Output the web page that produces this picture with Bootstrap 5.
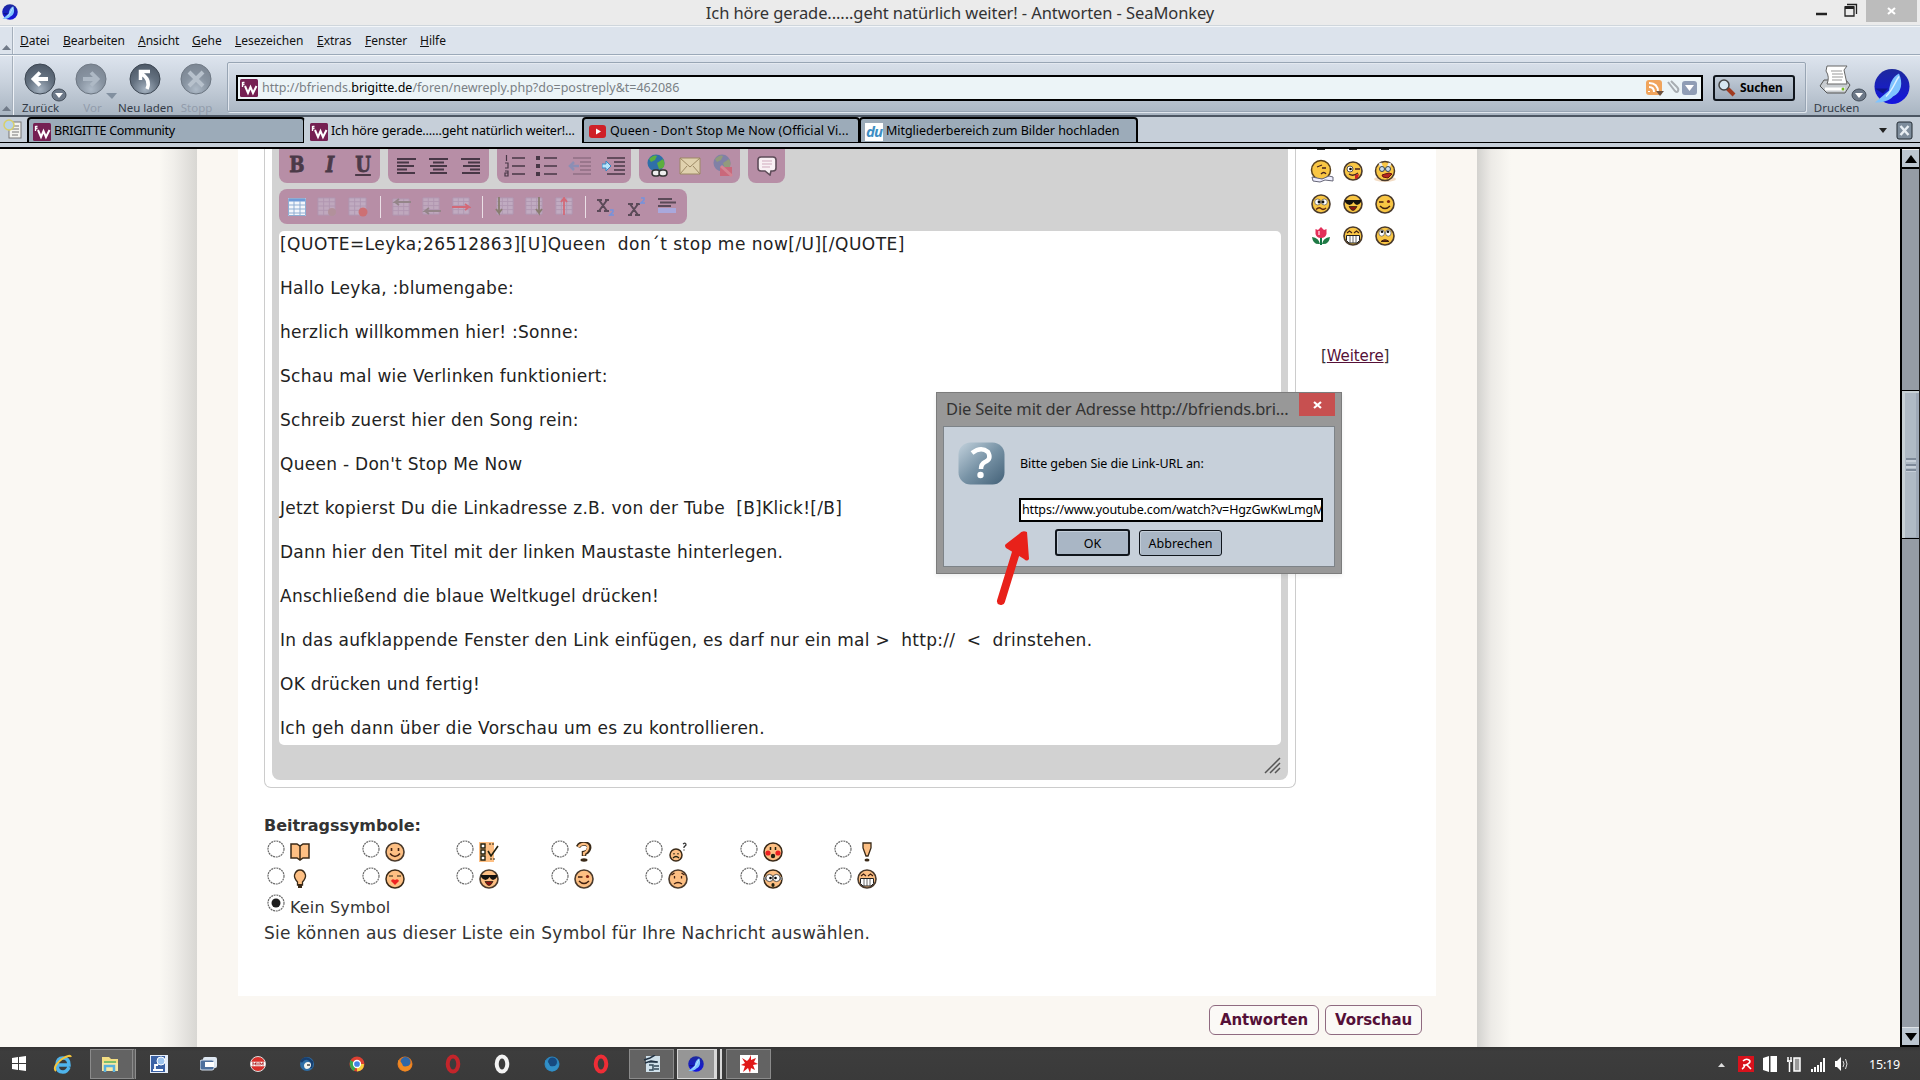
<!DOCTYPE html>
<html lang="de">
<head>
<meta charset="utf-8">
<title>Ich höre gerade......geht natürlich weiter! - Antworten - SeaMonkey</title>
<link rel="stylesheet" href="https://cdn.jsdelivr.net/npm/bootstrap@5.3.0/dist/css/bootstrap.min.css">
<script src="https://cdn.jsdelivr.net/npm/bootstrap@5.3.0/dist/js/bootstrap.bundle.min.js"></script>
<style>
body{width:1920px;height:1080px;font-family:"Noto Sans","Open Sans",sans-serif;font-size:12px;line-height:1;color:#000;background:#faf8f3}
svg{display:block;flex:none}
.nw{white-space:nowrap}
/* window chrome */
.titlebar{height:26px;background:#ebebeb;border-bottom:1px solid #cfd6dc}
.wintitle{top:5px;font-size:16.5px;letter-spacing:-.09px;color:#333}
.winclose{width:51px;height:22px;background:#bcbcbc}
.grip{width:13px;border-right:1px solid #a5afbb;box-shadow:1px 0 #eef2f7}
.menubar{height:29px;background:#dce3ec;border-bottom:1px solid #9ba9b9;border-top:1px solid #f3f6f9}
.menubar a{color:#111;text-decoration:none}
.toolbar{height:62px;background:linear-gradient(#dde4ee,#c8d1dc 45%,#a9b5c2);border-top:1px solid #f3f6f9;border-bottom:2px solid #4c5663}
.tool{width:52px;color:#343c48;font-size:11.5px}
.tool span{display:block;margin-left:-5px}
.tool.off{color:#929cab}
.urlbox{width:1579px;height:50px;border:1px solid #98a5b4;border-radius:2px;box-shadow:1px 1px #dfe5ec,inset 1px 1px #e3e8ef;padding-top:2px}
.urlfield{width:1467px;height:26px;border:2px solid #000;background:#ecf4f7;color:#7a8085;font-size:12.5px;padding-left:2px}
.suchen{width:82px;height:26px;border:2px solid #10151c;border-radius:3px;background:linear-gradient(#c0cad6,#9eabba);font-weight:700;font-size:12px;letter-spacing:-.1px}
.tabrow{height:26px;background:#c6cfd9;border-bottom:1px solid #000}
.tabx{height:26px;border:2px solid #000;border-bottom-width:1px;border-radius:4px 4px 0 0;background:#9cabb9;font-size:12.5px;letter-spacing:-.1px;margin-right:-1px;padding-top:2px}
.tabx.on{background:#c6cfd9;border-color:transparent;margin-bottom:-1px}
.substrip{height:6px;background:#c6cfd9;border-bottom:2px solid #000}
/* page */
.view{height:898px;background:#faf8f3;overflow:hidden}
.shl{width:197px;background:linear-gradient(90deg,transparent 160px,#f0eeea 174px,#d8d7d3 197px)}
.shr{width:423px;background:linear-gradient(90deg,#d3d2cf,#eceae6 14px,transparent 34px)}
.sheet{width:1280px;background:#faf7f2;padding:0 41px 0 41px}
.paper{height:847px;background:#fff;padding-left:26px}
.edframe{width:1032px;height:639px;border:1px solid #ccc;border-top:0;border-radius:0 0 7px 7px;padding:0 7px 7px}
.edgrey{height:631px;background:#d2d2d2;border-radius:0 0 8px 8px;padding:0 7px 0 7px}
.grp{height:34px;background:#b78ea6;border-radius:0 0 8px 8px;gap:15px;padding:0 7px}
.fmt{font:900 22px/22px "DejaVu Serif","Liberation Serif",serif;color:#4b3a48;width:20px;text-align:center;transform:scaleX(.82);-webkit-text-stroke:.8px #4b3a48}
.grp2{height:35px;width:408px;background:#b78ea6;border-radius:8px;padding:0 9px}
.sep{width:1px;height:22px;background:#eadfe6}
.areatext{height:514px;background:#fff;border-radius:5px;padding:2px 1px 0;font:17px/22px "DejaVu Sans",sans-serif;color:#222;white-space:pre;letter-spacing:.28px}
.dv{font-family:"DejaVu Sans",sans-serif;color:#333}
.actbtn{height:30px;border:1px solid #8f6a80;border-radius:6px;background:#fbf9f6;color:#551038;font:700 15px/27px "DejaVu Sans",sans-serif;letter-spacing:-.1px;padding:0}
/* scrollbar */
.sb{width:20px;background:#959ca5;border-left:2px solid #000;border-right:1px solid #222}
.sbb{height:20px;background:#bcc6d0;border-bottom:2px solid #000;border-top:1px solid #eee}
.thumb{height:149px;margin-top:221px;background:#afbac5;border:solid #000;border-width:1px 0;box-shadow:inset 3px 2px #c7d0d5,inset -3px -1px #9ea9b7}
/* dialog */
.dlg{left:936px;top:392px;width:406px;height:182px;background:#989898;border:1px solid #7c7c7c;padding:0 6px 6px 6px}
.dlgin{height:141px;background:#c7d0da;border:1px solid #7d8388;padding:0 0 0 14px;margin-top:-1px}
.dtitle{font-size:16.5px;letter-spacing:-.17px;padding:8px 0 0 3px;color:#333}
.dbtn{border:1px solid #10151c;border-radius:3px;background:#a9b6c5;box-shadow:inset 1px 1px #c3cdd8;font-size:12.5px}
.linkfield{margin:12px 0 0 61px;width:304px;height:24px;border:2px solid #000;font-size:12.5px;letter-spacing:-.13px;padding-top:1px}
.caret{width:1px;height:18px;margin-left:1px;background:#000}
.arrowmark{left:996px;top:528px}
/* taskbar */
.taskbar{height:33px;background:linear-gradient(#333,#3d3d3d 4px,#3a3a3a)}
.tile{background:#636363;border:1px solid #8b8b8b}
</style>
</head>
<body class="overflow-hidden d-flex flex-column position-relative">

<svg width="0" height="0" class="position-absolute">
<defs>
<radialGradient id="orb" cx=".5" cy=".85" r=".9"><stop offset="0" stop-color="#a5b2c0"/><stop offset=".5" stop-color="#647180"/><stop offset="1" stop-color="#4a5563"/></radialGradient>
<linearGradient id="blu" x2="0" y2="1"><stop offset="0" stop-color="#1d2a9c"/><stop offset="1" stop-color="#1414e0"/></linearGradient>
<linearGradient id="qm" x2="1" y2="1"><stop offset="0" stop-color="#c3d2dd"/><stop offset=".5" stop-color="#7893a6"/><stop offset="1" stop-color="#436178"/></linearGradient>
<symbol id="sm" viewBox="0 0 36 36"><circle cx="18" cy="18" r="17.500" fill="url(#blu)"/><path d="M25 5C18 9 16 15 15 22L1 34c9 0 14-2 18-6C28 24 29 14 25 5z" fill="#7fc4ff"/><path d="M1 20h13l-5 5" fill="#0c1475" opacity=".7"/><path d="M25 8C21 13 20 20 12 28" stroke="#dff2ff" stroke-width="1.500" fill="none"/></symbol>
<symbol id="bw" viewBox="0 0 18 18"><rect width="18" height="18" rx="1.500" fill="#752052"/><path d="M2.500 3v5M2.500 3.500h2M2.500 5.500h2" stroke="#fff" stroke-width="1.300"/><path d="M5 7l3 7 2.500-6L13 14l3.500-7" stroke="#fff" stroke-width="2" fill="none"/></symbol>
<symbol id="drop" viewBox="0 0 16 14"><ellipse cx="8" cy="7" rx="7" ry="6" fill="#6c7888" stroke="#444e5a"/><path d="M4 5h8l-4 5z" fill="#fff"/></symbol>
<symbol id="fc" viewBox="0 0 20 20"><circle cx="10" cy="10" r="9" stroke="#4a3a2c" stroke-width="1.600"/></symbol>
<symbol id="smile" viewBox="0 0 20 20"><use href="#fc"/><path d="M6.500 6v3M13.500 6v3M5 11.500q5 6 10 0" stroke="#402010" stroke-width="1.600" fill="none"/></symbol>
<symbol id="wink" viewBox="0 0 20 20"><use href="#fc"/><path d="M4 8h4.500M5 12q5 5 10 0" stroke="#402010" stroke-width="1.500" fill="none"/><circle cx="13.500" cy="7.500" r="1.600" fill="#802010"/></symbol>
<symbol id="cool" viewBox="0 0 20 20"><use href="#fc"/><path d="M2 6h16v2q-2 3-4 3t-3.500-3Q9 11 6.500 11T2 8z" fill="#15120f"/><path d="M6 12.500h8q-4 8-8 0z" fill="#8a1510" stroke="#321" stroke-width=".8"/></symbol>
<symbol id="grin" viewBox="0 0 20 20"><use href="#fc"/><path d="M4 7l2.500-2L9 7M11 7l2.500-2L16 7" stroke="#402010" stroke-width="1.200" fill="none"/><path d="M3.500 9.500h13v5l-2.500 2.500H6L3.500 14.500z" fill="#fff" stroke="#222" stroke-width="1"/><path d="M7 10v7M10 10v7M13 10v7" stroke="#444" stroke-width=".8"/></symbol>
<symbol id="eyes" viewBox="0 0 20 20"><use href="#fc"/><ellipse cx="6.700" cy="7" rx="2.800" ry="3.200" fill="#fff" stroke="#555" stroke-width=".7"/><ellipse cx="13.300" cy="7" rx="2.800" ry="3.200" fill="#fff" stroke="#555" stroke-width=".7"/><circle cx="7" cy="5.800" r="1.300" fill="#111"/><circle cx="13" cy="5.800" r="1.300" fill="#111"/><path d="M6 15.500q4-3.500 8 0z" fill="#7c2b12" stroke="#402010"/></symbol>
<symbol id="conf" viewBox="0 0 20 20"><use href="#fc"/><circle cx="6.700" cy="8" r="3" fill="#fff" stroke="#555" stroke-width=".7"/><circle cx="13.300" cy="8" r="3" fill="#fff" stroke="#555" stroke-width=".7"/><circle cx="8" cy="8" r="1.400" fill="#111"/><circle cx="12" cy="8" r="1.400" fill="#111"/><path d="M5 15.500q3-3 5-1t5-.5" fill="none" stroke="#602a10" stroke-width="1.500"/></symbol>
<symbol id="sad" viewBox="0 0 20 20"><use href="#fc"/><path d="M6.500 7v2.500M13.500 7v2.500M3.500 6l3-2M16.500 6l-3-2M6 15q4-3 8 0" stroke="#402010" stroke-width="1.300" fill="none"/></symbol>
<symbol id="rad" viewBox="0 0 18 18"><circle cx="9" cy="9" r="8" fill="#fff" stroke="#6a6a6a" stroke-width="1.200" stroke-dasharray="2 .7"/></symbol>
<symbol id="opera" viewBox="0 0 20 20"><ellipse cx="10" cy="10" rx="5.300" ry="7.500" fill="none" stroke="currentColor" stroke-width="4"/></symbol>
<symbol id="grid" viewBox="0 0 20 20"><rect x="1" y="1" width="18" height="18" fill="#cfd8ea"/><path d="M1 5h18M1 9.500h18M1 14h18M7 1v18M13 1v18M1 1h18v18H1z" stroke="#a7a7c4" fill="none"/></symbol>
<symbol id="globe" viewBox="0 0 20 20"><circle cx="10" cy="9" r="8.500" fill="#2f6fa8"/><path d="M3 5q5-5 8-3l-2 4-4 2zM11 9l6-4q3 5 0 9l-4 1z" fill="#5cae3e"/></symbol>
</defs>
</svg>

<header class="titlebar d-flex align-items-start flex-shrink-0 position-relative">
  <svg width="18" height="16" class="mt-1" style="margin-left:1px"><use href="#sm"/></svg>
  <div class="wintitle nw position-absolute start-50 translate-middle-x">Ich höre gerade......geht natürlich weiter! - Antworten - SeaMonkey</div>
  <div class="d-flex ms-auto" style="margin-right:3px">
    <svg width="54" height="22"><path d="M4 14h11" stroke="#222" stroke-width="2.500"/><path d="M33 7h9v9h-9zM35 4.500h9.500V14" stroke="#222" stroke-width="1.300" fill="none"/><path d="M33 7.500h9" stroke="#222" stroke-width="3"/></svg>
    <div class="winclose d-flex align-items-center justify-content-center"><svg width="10" height="8"><path d="M1 1l7 6M8 1L1 7" stroke="#fff" stroke-width="2.200"/></svg></div>
  </div>
</header>

<nav class="menubar d-flex flex-shrink-0">
  <div class="grip d-flex align-items-end justify-content-center pb-1"><svg width="9" height="5"><path d="M0 5h9L4.500 0z" fill="#707a88"/></svg></div>
  <div class="d-flex align-items-center nw">
    <a href="#" style="width:43px;margin-left:7px"><u>D</u>atei</a><a href="#" style="width:75px"><u>B</u>earbeiten</a><a href="#" style="width:54px"><u>A</u>nsicht</a><a href="#" style="width:43px"><u>G</u>ehe</a><a href="#" style="width:82px"><u>L</u>esezeichen</a><a href="#" style="width:48px"><u>E</u>xtras</a><a href="#" style="width:55px"><u>F</u>enster</a><a href="#"><u>H</u>ilfe</a>
  </div>
</nav>

<div class="toolbar d-flex flex-shrink-0 nw">
  <div class="grip d-flex align-items-end justify-content-center pb-1"><svg width="9" height="5"><path d="M0 5h9L4.500 0z" fill="#707a88"/></svg></div>
  <div class="d-flex" style="padding-top:7px">
    <div class="tool text-center ms-1"><svg width="56" height="39"><circle cx="23" cy="16" r="15" fill="url(#orb)" stroke="#3d4753"/><path d="M31 16H17M23 9.500L16.500 16l6.500 6.500" stroke="#fff" stroke-width="3.800" fill="none"/><use href="#drop" x="34" y="25" width="16" height="14"/></svg><span>Zurück</span></div>
    <div class="tool off text-center"><svg width="54" height="39"><circle cx="22" cy="16" r="15" fill="url(#orb)" stroke="#3d4753" opacity=".65"/><path d="M14 16h14M22 9.500l6.500 6.500-6.500 6.500" stroke="#aeb9c5" stroke-width="3.800" fill="none"/><path d="M37 30h11l-5 6z" fill="#8290a0"/></svg><span>Vor</span></div>
    <div class="tool text-center"><svg width="52" height="39"><circle cx="24" cy="16" r="15" fill="url(#orb)" stroke="#3d4753"/><path d="M26 26q4-9-5-15M29 8.500h-9.500V17" stroke="#fff" stroke-width="3.500" fill="none"/></svg><span style="margin-left:-3px">Neu laden</span></div>
    <div class="tool off text-center"><svg width="50" height="39"><circle cx="23" cy="16" r="15" fill="url(#orb)" stroke="#3d4753" opacity=".65"/><path d="M16 9l14 14M30 9L16 23" stroke="#b7c1cc" stroke-width="4"/></svg><span>Stopp</span></div>
  </div>
  <div class="urlbox d-flex align-items-center px-2" style="margin:6px 0 0 2px">
    <div class="urlfield d-flex align-items-center"><svg width="18" height="18" class="me-1"><use href="#bw"/></svg><span>http://bfriends.<span class="text-black">brigitte.de</span>/foren/newreply.php?do=postreply&amp;t=462086</span>
      <svg width="52" height="18" class="ms-auto" style="margin-right:3px"><rect y="1" width="16" height="15" rx="3" fill="#f0a45c"/><path d="M3 12v1M3 8q5 0 5 5M3 4q9 0 9 9" stroke="#fff" stroke-width="2" fill="none"/><path d="M10 12h8l-4 5z" fill="#6b5140"/><path d="M22 3l7 9q2 2 3 0t-1-4l-6-6" stroke="#a8adb2" stroke-width="2" fill="none"/><rect x="36" y="2" width="15" height="14" rx="3" fill="#8f9db5"/><path d="M39 6h9l-4.500 6z" fill="#fff"/></svg>
    </div>
    <button class="suchen d-flex align-items-center p-0" style="margin-left:10px;padding-left:2px!important"><svg width="20" height="18" style="margin-right:3px"><path d="M10 9l7 7" stroke="#a03a20" stroke-width="4"/><circle cx="7" cy="6" r="5" fill="#d7e6f0" stroke="#444" stroke-width="1.500"/></svg>Suchen</button>
  </div>
  <div class="text-center" style="width:64px;color:#343c48;font-size:11.500px;padding-top:8px"><svg width="62" height="38"><g transform="translate(1)"><path d="M13 22l4-6h22l4 5-5 8H20z" fill="#c8ccd0" stroke="#555"/><path d="M20 2h20l-3 4 3 14H20q3-7-1-13z" fill="#fff" stroke="#666"/><path d="M24 7h11M25 10h11M25 13h11M25 16h10" stroke="#999"/><path d="M18 25h20" stroke="#fff" stroke-width="3"/><circle cx="36" cy="25" r="1.500" fill="#7b2"/><use href="#drop" x="44" y="24" width="16" height="14"/></g></svg><span style="margin-right:3px">Drucken</span></div>
  <svg width="36" height="37" class="ms-auto" style="margin:12px 10px 0 0"><use href="#sm"/></svg>
</div>

<div class="tabrow d-flex align-items-start flex-shrink-0 nw">
  <svg width="20" height="21" style="margin:2px 4px 0 3px"><rect x="6" y="3" width="12" height="16" fill="#f4f4ef" stroke="#777"/><path d="M9 7h7M9 10h7M9 13h7M9 16h6" stroke="#777"/><circle cx="6" cy="6" r="5" fill="#b9d3e8" stroke="#d8cf6a" stroke-width="1.500"/></svg>
  <div class="tabx d-flex align-items-center ps-1" style="width:278px"><svg width="18" height="18" style="margin-right:3px"><use href="#bw"/></svg><span style="letter-spacing:-.3px">BRIGITTE Community</span></div>
  <div class="tabx on d-flex align-items-center ps-1" style="width:279px"><svg width="18" height="18" style="margin-right:3px"><use href="#bw"/></svg><span style="letter-spacing:-.12px">Ich höre gerade......geht natürlich weiter!...</span></div>
  <div class="tabx d-flex align-items-center ps-1" style="width:278px"><svg width="18" height="18" style="margin:0 3px 0 1px"><rect y="2" width="17" height="13" rx="3" fill="#cf2027"/><path d="M7 5.500v6l5-3z" fill="#fff"/></svg><span style="letter-spacing:.09px">Queen - Don't Stop Me Now (Official Vi...</span></div>
  <div class="tabx d-flex align-items-center ps-1" style="width:279px"><span class="bg-white fst-italic fw-bold text-center" style="width:18px;height:18px;margin-right:3px;color:#3f8fc4;font-size:15px;line-height:17px;letter-spacing:-1px">du</span><span style="letter-spacing:-.04px">Mitgliederbereich zum Bilder hochladen</span></div>
  <svg width="40" height="24" class="ms-auto" style="margin-right:4px"><path d="M3 11h8l-4 5z" fill="#222"/><rect x="21" y="5" width="15" height="17" rx="2" fill="#7e8d9c" stroke="#222a33"/><path d="M24.500 9l8 9M32.500 9l-8 9" stroke="#e8eef3" stroke-width="2.500"/></svg>
</div>
<div class="substrip flex-shrink-0"></div>

<main class="view d-flex flex-shrink-0">
  <div class="shl flex-shrink-0"></div>
  <div class="sheet flex-shrink-0">
    <div class="paper d-flex">
      <div class="flex-shrink-0">
        <div class="edframe">
          <div class="edgrey">
            <div class="d-flex" style="gap:8px">
              <div class="grp d-flex align-items-center justify-content-center pb-1" style="width:101px;gap:13px">
                <span class="fmt">B</span><span class="fmt fst-italic">I</span><span class="fmt text-decoration-underline">U</span>
              </div>
              <div class="grp d-flex align-items-center justify-content-center" style="width:101px;gap:13px">
                <svg width="19" height="18"><path d="M0 2h19M0 5.500h12M0 9h17M0 12.500h10M0 16h18" stroke="#483746" stroke-width="1.800"/></svg>
                <svg width="19" height="18"><path d="M0 2h19M4 5.500h11M1 9h17M4 12.500h11M1 16h17" stroke="#483746" stroke-width="1.800"/></svg>
                <svg width="19" height="18"><path d="M0 2h19M7 5.500h12M2 9h17M9 12.500h10M1 16h18" stroke="#483746" stroke-width="1.800"/></svg>
              </div>
              <div class="grp d-flex align-items-center justify-content-center" style="width:134px;gap:11px">
                <svg width="21" height="24"><path d="M8 4h13M8 12h13M8 20h13" stroke="#483746" stroke-width="1.700"/><path d="M2.500 1v6M1 9h3v5H1M1 17h3v5H1v-3h3" stroke="#483746" stroke-width="1.200" fill="none"/></svg>
                <svg width="21" height="24"><path d="M8 4h13M8 12h13M8 20h13" stroke="#483746" stroke-width="1.700"/><path d="M0 4h4M0 12h4M0 20h4" stroke="#483746" stroke-width="4"/></svg>
                <svg width="23" height="24" opacity=".35"><path d="M5 4h18M12 8h11M12 12h11M12 16h11M5 20h18" stroke="#483746" stroke-width="1.600"/><path d="M11 12H3M6 8l-4 4 4 4" stroke="#3f8fd0" stroke-width="2.500" fill="none"/></svg>
                <svg width="23" height="24"><path d="M5 4h18M12 8h11M12 12h11M12 16h11M5 20h18" stroke="#483746" stroke-width="1.700"/><path d="M0 10h4V7l5 5-5 5v-3H0z" fill="#b8e4fa" stroke="#3487c4"/></svg>
              </div>
              <div class="grp d-flex align-items-center justify-content-center" style="width:101px;gap:11px">
                <svg width="22" height="24"><use href="#globe" width="20" height="20"/><rect x="6" y="16" width="8" height="6" rx="3" fill="#eee" stroke="#333" stroke-width="1.500"/><rect x="13" y="16" width="8" height="6" rx="3" fill="#eee" stroke="#333" stroke-width="1.500"/></svg>
                <svg width="22" height="20"><path d="M1 2h20v16H1z" fill="#e0d1ae" stroke="#9d8965"/><path d="M1 2l10 9 10-9M1 18l7-8M21 18l-7-8" stroke="#9d8965" fill="none"/></svg>
                <svg width="22" height="24" opacity=".4"><use href="#globe" width="20" height="20"/><path d="M8 13h12v9H8z" fill="#e8303c"/><path d="M9 12l11 10" stroke="#f77" stroke-width="3"/></svg>
              </div>
              <div class="grp d-flex align-items-center justify-content-center" style="width:37px"><svg width="20" height="20"><path d="M4 1h12q3 0 3 3v8q0 3-3 3h-2l-1 4-5-4H4q-3 0-3-3V4q0-3 3-3z" fill="#f8f0f4" stroke="#5e4c59" stroke-width="1.600"/><path d="M5 5h10M5 8h10M5 11h8" stroke="#cfa9bd"/></svg></div>
            </div>
            <div class="grp2 d-flex align-items-center justify-content-between" style="margin-top:6px;margin-bottom:7px">
              <svg width="18" height="18"><rect width="18" height="18" fill="#f3f6fb"/><path d="M1 2h16" stroke="#6e9bd8" stroke-width="3"/><path d="M1 7h16M1 11h16M1 15h16M6 3v14M12 3v14M.5.5h17v17H.5z" stroke="#8fadd2" fill="none"/></svg>
              <svg width="20" height="20" opacity=".35"><use href="#grid" width="19" height="19"/><circle cx="15" cy="15" r="4" fill="#a98"/></svg>
              <svg width="20" height="20" opacity=".4"><use href="#grid" width="19" height="19"/><circle cx="15" cy="15" r="4.500" fill="#f0452c"/></svg>
              <div class="sep"></div>
              <svg width="19" height="19" opacity=".35"><use href="#grid" y="1" width="18" height="18"/><path d="M19 5H3l4-3M3 5l4 3" stroke="#575" stroke-width="1.800" fill="none"/></svg>
              <svg width="19" height="19" opacity=".35"><use href="#grid" width="18" height="18"/><path d="M19 14H3l4-3M3 14l4 3" stroke="#575" stroke-width="1.800" fill="none"/></svg>
              <svg width="19" height="19" opacity=".4"><use href="#grid" width="18" height="18"/><path d="M0 10h17l-4-3M17 10l-4 3" stroke="#f33" stroke-width="1.800" fill="none"/></svg>
              <div class="sep"></div>
              <svg width="19" height="19" opacity=".4"><use href="#grid" x="1" width="18" height="18"/><path d="M4 0v16l-3-4M4 16l3-4" stroke="#462" stroke-width="1.800" fill="none"/></svg>
              <svg width="19" height="19" opacity=".4"><use href="#grid" width="18" height="18"/><path d="M14 0v16l-3-4M14 16l3-4" stroke="#462" stroke-width="1.800" fill="none"/></svg>
              <svg width="19" height="19" opacity=".4"><use href="#grid" width="18" height="18"/><path d="M9 18V1L6 5M9 1l3 4" stroke="#f33" stroke-width="1.800" fill="none"/></svg>
              <div class="sep"></div>
              <svg width="19" height="20"><path d="M2 3l8 11M10 3L2 14M0 3h5M8 3h4M0 14h4M7 14h5" stroke="#5b4a58" stroke-width="2"/><path d="M13 13h3v2l-3 3h4" stroke="#7592dd" stroke-width="1.500" fill="none"/></svg>
              <svg width="19" height="20"><path d="M2 7l8 11M10 7L2 18M0 7h5M8 7h4M0 18h4M7 18h5" stroke="#5b4a58" stroke-width="2"/><path d="M13 1h3v2l-3 3h4" stroke="#7592dd" stroke-width="1.500" fill="none"/></svg>
              <svg width="20" height="20"><path d="M0 2h14M2 5.500h16M0 9h13" stroke="#5b4a58" stroke-width="2"/><rect y="11" width="18" height="5" fill="#a9a8dc"/></svg>
            </div>
            <div class="areatext"><span style="letter-spacing:.49px">[QUOTE=Leyka;26512863][U]Queen  don´t stop me now[/U][/QUOTE]</span>

Hallo Leyka, :blumengabe:

herzlich willkommen hier! :Sonne:

Schau mal wie Verlinken funktioniert:

Schreib zuerst hier den Song rein:

Queen - Don't Stop Me Now

Jetzt kopierst Du die Linkadresse z.B. von der Tube  [B]Klick![/B]

Dann hier den Titel mit der linken Maustaste hinterlegen.

Anschließend die blaue Weltkugel drücken!

In das aufklappende Fenster den Link einfügen, es darf nur ein mal &gt;  http://  &lt;  drinstehen.

OK drücken und fertig!

Ich geh dann über die Vorschau um es zu kontrollieren.</div>
            <div class="d-flex justify-content-end"><svg width="17" height="17" style="margin-top:12px"><path d="M1 16L16 1M6 16L16 6M11 16l5-5" stroke="#555" stroke-width="1.500"/></svg></div>
          </div>
        </div>
        <div class="dv" style="font-size:17px;letter-spacing:.25px">
          <div class="fw-bold" style="margin-top:30px;height:19px;font-size:16px;letter-spacing:-.05px">Beitragssymbole:</div>
          <div id="symbols" style="margin-top:3px"></div>
          <div class="d-flex align-items-start" style="height:27px;padding-left:3px"><svg width="18" height="18" style="margin:1px 3px 0 0"><use href="#rad"/><circle cx="9" cy="9" r="4.500" fill="#1d1d1d"/></svg><span style="padding:7px 0 0 2px;font-size:16px;letter-spacing:.15px">Kein Symbol</span></div>
          <div style="padding-top:5px">Sie können aus dieser Liste ein Symbol für Ihre Nachricht auswählen.</div>
        </div>
      </div>
      <div style="padding-left:9px">
        <svg width="100" height="2" style="margin-bottom:4px"><path d="M12 0h8M44 0h8M76 0h8" stroke="#333" stroke-width="2"/></svg>
        <div id="smileys" class="d-grid" style="grid-template-columns:repeat(3,32px);grid-template-rows:repeat(3,32.500px)"></div>
        <div class="dv" style="font-size:15px;letter-spacing:-.1px;margin-top:96px;padding-left:16px">[<u style="color:#551038">Weitere</u>]</div>
      </div>
    </div>
    <div class="d-flex justify-content-end" style="gap:6px;padding:9px 14px 0 0">
      <button class="actbtn" style="width:110px">Antworten</button>
      <button class="actbtn" style="width:97px">Vorschau</button>
    </div>
  </div>
  <div class="shr flex-shrink-0"></div>
  <div class="sb flex-shrink-0 d-flex flex-column">
    <div class="sbb d-flex align-items-center justify-content-center"><svg width="12" height="8"><path d="M0 8h12L6 0z"/></svg></div>
    <div class="thumb d-flex align-items-center justify-content-center"><svg width="10" height="14"><path d="M0 1h10M0 7h10M0 12h10" stroke="#6f7b8b" stroke-width="1.500"/><path d="M0 3h10M0 9h10M0 14h10" stroke="#dde3ea"/></svg></div>
    <div class="sbb d-flex align-items-center justify-content-center mt-auto border-top border-black"><svg width="12" height="8"><path d="M0 0h12L6 8z"/></svg></div>
  </div>
</main>

<footer class="taskbar d-flex align-items-center flex-grow-1">
  <div id="tasks" class="d-flex align-items-center"></div>
  <div class="d-flex align-items-center ms-auto text-white" style="padding-right:20px">
    <svg width="132" height="22"><path d="M1 14h7L4.500 10z" fill="#ddd"/><rect x="21" y="3" width="16" height="16" fill="#d8121c"/><path d="M26 8q3-3 6-1t-3 5h-3M30 12l4 4M25 16q2-1 3-4" stroke="#fff" stroke-width="1.600" fill="none"/><path d="M46 5l6-2v16l-6-2zM53.500 3H60v16h-6.500z" fill="#fff"/><path d="M71 4v5M74 4v5M70 8h5M72.500 9v10" stroke="#fff" stroke-width="1.500"/><rect x="77" y="5" width="6" height="13" fill="#999" stroke="#fff" stroke-width="1.500"/><path d="M95 19v-3M98 19v-5M101 19v-7M104 19v-10M107 19V5" stroke="#fff" stroke-width="2"/><path d="M118 8h2l4-4v14l-4-4h-2z" fill="#fff"/><path d="M126 8q2 3 0 6M128.500 6q3 5 0 10" stroke="#ddd" fill="none"/></svg>
    <span style="font-size:12.500px;margin-left:20px;padding-top:4px;letter-spacing:-.2px">15:19</span>
  </div>
</footer>

<div class="dlg position-absolute shadow-sm">
  <div class="d-flex align-items-start nw" style="height:34px">
    <span class="dtitle">Die Seite mit der Adresse http://bfriends.bri...</span>
    <div class="d-flex align-items-center justify-content-center ms-auto" style="width:36px;height:23px;background:#c75050"><svg width="9" height="8"><path d="M1 1l7 6M8 1L1 7" stroke="#fff" stroke-width="2.200"/></svg></div>
  </div>
  <div class="dlgin nw">
    <div class="d-flex align-items-center" style="padding-top:15px">
      <svg width="47" height="44"><rect x=".5" y=".5" width="46" height="42" rx="12" fill="url(#qm)"/><path d="M14 11q9-7 16-1 4 7-3 10-4 2-4 7" fill="none" stroke="#fff" stroke-width="4.500"/><circle cx="22.500" cy="33" r="3.200" fill="#fff"/></svg>
      <span style="margin-left:15px;font-size:12.500px;letter-spacing:-.06px">Bitte geben Sie die Link-URL an:</span>
    </div>
    <div class="linkfield overflow-hidden d-flex align-items-center bg-white"><span class="caret"></span><span>https://www.youtube.com/watch?v=HgzGwKwLmgM</span></div>
    <div class="d-flex align-items-center" style="padding:7px 0 0 97px;gap:9px">
      <button class="dbtn p-0 pt-1" style="width:75px;height:27px;border-width:2px">OK</button>
      <button class="dbtn p-0 pt-1" style="width:83px;height:26px">Abbrechen</button>
    </div>
  </div>
</div>
<svg class="arrowmark position-absolute" width="40" height="80"><path d="M22 18L5 73" stroke="#e8211a" stroke-width="8" stroke-linecap="round"/><path d="M23 6q3-4 8-2l2 27q-2 3-5 0L10 20q-2-3 0-4z" fill="#e8211a"/></svg>

<script>
const S='#422';
const face=(id,c,s=20)=>`<svg width="${s}" height="${s}" fill="${c}"><use href="#${id}" width="${s}" height="${s}"/></svg>`;
const sv=(w,h,b)=>`<svg width="${w}" height="${h}" viewBox="0 0 ${w} ${h}">${b}</svg>`;
// smiley palette beside the editor
const Y='#f9c644';
document.getElementById('smileys').innerHTML=[
 sv(26,24,`<circle cx="13" cy="11" r="9.500" fill="${Y}" stroke="#5a421c" stroke-width="1.500"/><path d="M9 8l5-2M14 9h4M13 15q3-3 5 0" stroke="${S}" stroke-width="1.300" fill="none"/><path d="M4 18l5 1 5 1 7-3 4 1v4l-8-1-5 2-7-1z" fill="#eef" stroke="#667"/>`),
 sv(20,24,`<circle cx="10" cy="12" r="9" fill="${Y}" stroke="#4a3a2c" stroke-width="1.600"/><circle cx="7" cy="10" r="3" fill="#fff" stroke="#555"/><circle cx="7.500" cy="10" r="1.300"/><path d="M12 10h5M6 15q4 3 9-1" stroke="${S}" stroke-width="1.300" fill="none"/><path d="M12 16l4-1-1 4-3 1z" fill="#c22"/>`),
 sv(22,24,`<ellipse cx="11" cy="20" rx="11" ry="3" fill="#f3dcc4"/><circle cx="11" cy="12" r="9.500" fill="${Y}" stroke="#4a3a2c" stroke-width="1.500"/><path d="M6 4l2 5M16 4l-2 5" stroke="#eee" stroke-width="3"/><circle cx="8" cy="10" r="2.500" fill="#cde" stroke="#345"/><circle cx="14" cy="10" r="2.500" fill="#cde" stroke="#345"/><path d="M8 16l3-1 4-1 3 1-4 4-5-1z" fill="#b5281e" stroke="#611"/>`),
 face('conf',Y),face('cool',Y),face('wink',Y),
 sv(20,20,`<path d="M10 9v10" stroke="#174" stroke-width="2"/><path d="M1 11q7 1 8 7-7 1-8-7zM19 11q-7 1-8 7 7 1 8-7z" fill="#1f7a45"/><path d="M4.500 3l2.500 1 3-3 3 3 2.500-1v5q-1 4-5.500 4T4.500 8z" fill="#e3305a"/><path d="M8 5v4" stroke="#f8a0b4" stroke-width="2"/>`),
 face('grin',Y),face('eyes',Y)].map(x=>`<div class="d-flex justify-content-center align-items-center">${x}</div>`).join('');

// post icons, two rows of seven
const O='#fdbf83';
const rows=[[
 sv(20,20,`<path d="M1 2h6l3 2 3-2h6v14h-6l-3 2-3-2H1zM10 4v14" fill="${O}" stroke="#3a2a18" stroke-width="1.500"/>`),
 face('smile',O),
 sv(20,20,`<rect width="15" height="20" fill="${O}"/><path d="M2 2h4v4H2zM2 8h4v4H2zM2 14h4v4H2z" fill="#fff" stroke="#221" stroke-width="1.400"/><path d="M9 9l3 5 7-10" stroke="#221" stroke-width="1.600" fill="none"/><path d="M10 2h6M11 17h5" stroke="#221" stroke-dasharray="2 1"/>`),
 sv(20,20,`<path d="M4 5q2-4 7-3.500 5 1 4 5t-5 4.500v3" fill="none" stroke="#3a2a18" stroke-width="4.500"/><path d="M4.500 5q2-3.500 6.500-3 4 1 3 4.500T10 11v2.500" fill="none" stroke="${O}" stroke-width="2.200"/><ellipse cx="10" cy="18" rx="3.500" ry="1.700" fill="#3a2a18"/>`),
 sv(20,20,`<circle cx="8" cy="13" r="6" fill="${O}" stroke="#3a2a18" stroke-width="1.500"/><path d="M6 11v1.500M10 11v1.500M5 16q3-3 6 0" stroke="#221" fill="none" stroke-width="1.200"/><path d="M15 2q3-2 3 1l-2 2v1M16 7.500v1" stroke="#333" fill="none" stroke-width="1.300"/>`),
 sv(20,20,`<circle cx="10" cy="10" r="9" fill="${O}" stroke="#3a2a18" stroke-width="1.500"/><path d="M7.500 5v3M12.500 5v3" stroke="#221" stroke-width="1.500"/><circle cx="5" cy="11" r="2.600" fill="#e22"/><circle cx="15" cy="11" r="2.600" fill="#e22"/><circle cx="10" cy="14" r="2.200" fill="#221"/>`),
 sv(20,20,`<path d="M6 1h8v5l-3 8H9L6 6z" fill="${O}" stroke="#3a2a18" stroke-width="1.300"/><ellipse cx="10" cy="18" rx="2.500" ry="1.500" fill="#3a2a18"/>`)],[
 sv(20,20,`<path d="M7.500 13Q4 9 4.500 6 6 1 10 1t5.500 5q.5 3-3 7v3h-5z" fill="${O}" stroke="#3a2a18" stroke-width="1.300"/><path d="M8 15h4v4H8z" fill="#3a2a18"/>`),
 sv(20,20,`<circle cx="10" cy="10" r="9" fill="${O}" stroke="#3a2a18" stroke-width="1.500"/><path d="M4 7h4M12 7h4" stroke="#221"/><path d="M10 16l-4-4q1-3 4-1 3-2 4 1z" fill="#e22"/>`),
 face('cool',O),face('wink',O),face('sad',O),
 sv(20,20,`<circle cx="10" cy="10" r="9" fill="${O}" stroke="#3a2a18" stroke-width="1.500"/><path d="M1 8h18v3H1z" fill="#888"/><circle cx="6.500" cy="9" r="3.600" fill="#fff" stroke="#333" stroke-width=".8"/><circle cx="13.500" cy="9" r="3.600" fill="#fff" stroke="#333" stroke-width=".8"/><circle cx="7.500" cy="9" r="1.300"/><circle cx="12.500" cy="9" r="1.300"/><ellipse cx="10" cy="16" rx="1.600" ry="2" fill="#221"/>`),
 face('grin',O)]];
document.getElementById('symbols').innerHTML=rows.map(r=>`<div class="d-flex" style="height:26.500px;padding-left:3px">`+r.map(i=>
 `<div class="d-flex align-items-start" style="width:94.500px"><svg width="18" height="18"><use href="#rad"/></svg><div style="padding:2px 0 0 5px">${i}</div></div>`).join('')+'</div>').join('');

// task bar: [width, tile style, icon]
const t=[
 [38,'',sv(15,15,'<path d="M0 2l6-1v6H0zM7 1l7-1v7H7zM0 8h6v6l-6-1zM7 8h7v7l-7-1z" fill="#fff"/>')],
 [50,'',sv(20,20,'<path d="M16 13q-2 5-6 5-6 0-6-7t6-7q6 0 6 7H5" stroke="#4fb4ec" stroke-width="3.500" fill="none"/><path d="M3 17Q-1 13 9 5q8-5 9-2" stroke="#f3c43c" stroke-width="2" fill="none"/>')],
 [46,'tile',sv(20,18,'<path d="M2 2h7l2 2h7v12H2z" fill="#f3dd82"/><path d="M4 6h12v3H4z" fill="#7cbf6a"/><path d="M2 8h16v8H2z" fill="#f7e8a4"/><path d="M5 17v-6h9v6" stroke="#58b0dc" stroke-width="2.500" fill="none"/>')],
 [48,'',sv(18,18,'<rect width="18" height="18" fill="#e6eefa"/><rect x="1" y="1" width="14" height="16" fill="#3b62a5"/><circle cx="11" cy="6" r="4" fill="#9dc4ee" stroke="#fff"/><path d="M3 15h10M5 15v-5h3" stroke="#fff" stroke-width="1.800" fill="none"/>')],
 [52,'',sv(18,14,'<rect x="3" width="14" height="11" rx="2" fill="#dfe8f2"/><rect y="3" width="14" height="10" rx="2" fill="#4c6f9d" stroke="#d5e0ec"/><path d="M5 5h9v5H5z" fill="#fff"/>')],
 [46,'',sv(16,16,'<circle cx="8" cy="8" r="7.500" fill="#d9302b" stroke="#ddd"/><path d="M1 8h14" stroke="#fff" stroke-width="4.500"/><path d="M3 9.500v-3l2 2 1-2v3M8 6.500v3M10 9.500v-3l1.500 2 1.500-2v3" stroke="#a22" fill="none"/>')],
 [52,'',sv(16,16,'<circle cx="8" cy="8" r="7" fill="#2e6ea6"/><path d="M2 6q5-7 11 0l-1 6" stroke="#173f70" stroke-width="2.500" fill="none"/><path d="M5 9q1-3 4-3t3 3-4 4q-3 0-3-4z" fill="#f5f5ef"/><path d="M8 9h3" stroke="#444" stroke-width="1.500"/>')],
 [48,'',sv(16,16,'<circle cx="8" cy="8" r="7.500" fill="#dd4032"/><path d="M8 8l-3 7Q0 13 1 4z" fill="#3ba84e"/><path d="M8 8h7q0 7-7 7.500z" fill="#f6cf3c"/><circle cx="8" cy="8" r="3.500" fill="#4385e6" stroke="#fff" stroke-width="1.300"/>')],
 [48,'',sv(16,16,'<circle cx="8" cy="8" r="7.500" fill="#e5781f"/><circle cx="8.500" cy="6" r="5" fill="#2f67a8"/><path d="M1 4q4 2 5 6 4 2 9-3-1 8-7 8.500Q1 14 1 4z" fill="#ee8a25"/>')],
 [48,'',`<svg width="20" height="20" color="#c3252b"><use href="#opera"/></svg>`],
 [50,'',`<svg width="20" height="20" color="#f3f3f3"><use href="#opera"/></svg>`],
 [49,'',sv(16,16,'<circle cx="8" cy="8" r="7.500" fill="#2d86bd"/><circle cx="8.500" cy="6" r="4.500" fill="#174a80"/><path d="M1 4q4 2 5 6 4 2 9-3-1 8-7 8.500Q1 14 1 4z" fill="#3190c8"/>')],
 [49,'',`<svg width="20" height="20" color="#ee2d36"><use href="#opera"/></svg>`]];
let h=t.map(([w,c,i])=>`<div class="${c} d-flex align-items-center justify-content-center flex-shrink-0" style="width:${w}px;height:30px${c?';margin:0 -1px 0 2px;padding-right:4px;border-right:4px double #8b8b8b':''}">${i}</div>`).join('');
h+=`<div class="tile d-flex align-items-center justify-content-center" style="width:45px;height:30px;margin-left:4px">${sv(18,18,'<rect x="3" y="1" width="14" height="16" fill="#cfe0ea"/><path d="M6 7h9M6 10h4v5H6M11 11h5M11 14h5" stroke="#334a5a" stroke-width="1.500" fill="none"/><path d="M1 5l6-2 5-3M2 8l6-2 6 1" stroke="#234" stroke-width="1.500" fill="none"/>')}</div>
<div class="d-flex align-items-center justify-content-center" style="width:38px;height:30px;background:#969696;border:1px solid #d8d8d8;margin-left:3px"><svg width="16" height="16"><use href="#sm"/></svg></div><div style="width:7px;height:30px;border:solid #d8d8d8;border-width:0 2px"></div>
<div class="tile d-flex align-items-center justify-content-center" style="width:45px;height:30px;margin-left:4px">${sv(18,18,'<rect width="18" height="18" fill="#fff"/><path d="M9 4l2-4 0 5 5-2-2 4 4 2-5 1 2 5-4-2-1 5-2-5-5 4 2-6-4-1 4-2-3-5 5 3z" fill="#e01818"/>')}</div>`;
document.getElementById('tasks').innerHTML=h;
</script>
</body>
</html>
